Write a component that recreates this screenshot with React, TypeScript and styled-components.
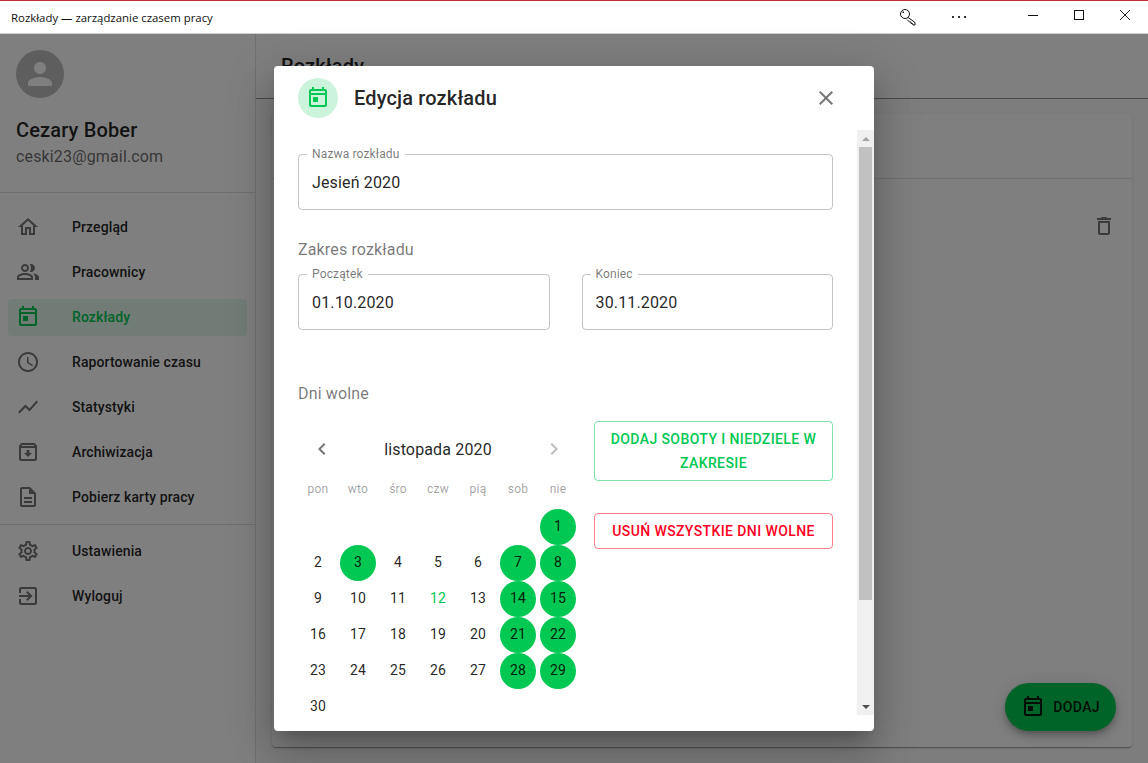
import React from 'react';
import styled, { createGlobalStyle } from 'styled-components';

const GREEN = '#00c853';
const RED = '#ff0022';

const paths = {
  home: 'M12 5.69l5 4.5V18h-2v-6H9v6H7v-7.81l5-4.5M12 3L2 12h3v8h6v-6h2v6h6v-8h3L12 3z',
  people: 'M16.67 13.13C18.04 14.06 19 15.32 19 17v3h4v-3c0-2.18-3.57-3.47-6.33-3.87zM15 12c2.21 0 4-1.79 4-4s-1.79-4-4-4c-.47 0-.91.1-1.33.24C14.5 5.27 15 6.58 15 8s-.5 2.73-1.33 3.76c.42.14.86.24 1.33.24zM9 12c2.21 0 4-1.79 4-4s-1.79-4-4-4-4 1.79-4 4 1.79 4 4 4zm0-6c1.1 0 2 .9 2 2s-.9 2-2 2-2-.9-2-2 .9-2 2-2zM9 13c-2.67 0-8 1.34-8 4v3h16v-3c0-2.66-5.33-4-8-4zm6 5H3v-.99C3.2 16.29 6.3 15 9 15s5.8 1.29 6 2v1z',
  today: 'M19 3h-1V1h-2v2H8V1H6v2H5c-1.11 0-1.99.9-1.99 2L3 19c0 1.1.89 2 2 2h14c1.1 0 2-.9 2-2V5c0-1.1-.9-2-2-2zm0 16H5V9h14v10zm0-12H5V5h14v2zM7 11h5v5H7z',
  clock: 'M11.99 2C6.47 2 2 6.48 2 12s4.47 10 9.99 10C17.52 22 22 17.52 22 12S17.52 2 11.99 2zM12 20c-4.42 0-8-3.58-8-8s3.58-8 8-8 8 3.58 8 8-3.58 8-8 8zm.5-13H11v6l5.25 3.15.75-1.23-4.5-2.67z',
  chart: 'M3.5 18.49l6-6.01 4 4L22 6.92l-1.41-1.41-7.09 7.97-4-4L2 16.99z',
  archive: 'M20.54 5.23l-1.39-1.68C18.88 3.21 18.47 3 18 3H6c-.47 0-.88.21-1.16.55L3.46 5.23C3.17 5.57 3 6.02 3 6.5V19c0 1.1.9 2 2 2h14c1.1 0 2-.9 2-2V6.5c0-.48-.17-.93-.46-1.27zM6.24 5h11.52l.83 1H5.42l.82-1zM5 19V8h14v11H5zm8.45-9h-2.9v3H8l4 4 4-4h-2.55z',
  doc: 'M8 16h8v2H8zm0-4h8v2H8zm6-10H6c-1.1 0-2 .9-2 2v16c0 1.1.89 2 1.99 2H18c1.1 0 2-.9 2-2V8l-6-6zm4 18H6V4h7v5h5v11z',
  settings: 'M19.43 12.98c.04-.32.07-.64.07-.98 0-.34-.03-.66-.07-.98l2.11-1.65c.19-.15.24-.42.12-.64l-2-3.46c-.09-.16-.26-.25-.44-.25-.06 0-.12.01-.17.03l-2.49 1c-.52-.4-1.08-.73-1.69-.98l-.38-2.65C14.46 2.18 14.25 2 14 2h-4c-.25 0-.46.18-.49.42l-.38 2.65c-.61.25-1.17.59-1.69.98l-2.49-1c-.06-.02-.12-.03-.18-.03-.17 0-.34.09-.43.25l-2 3.46c-.13.22-.07.49.12.64l2.11 1.65c-.04.32-.07.65-.07.98 0 .33.03.66.07.98l-2.11 1.65c-.19.15-.24.42-.12.64l2 3.46c.09.16.26.25.44.25.06 0 .12-.01.17-.03l2.49-1c.52.4 1.08.73 1.69.98l.38 2.65c.03.24.24.42.49.42h4c.25 0 .46-.18.49-.42l.38-2.65c.61-.25 1.17-.59 1.69-.98l2.49 1c.06.02.12.03.18.03.17 0 .34-.09.43-.25l2-3.46c.12-.22.07-.49-.12-.64l-2.11-1.65zm-1.98-1.71c.04.31.05.52.05.73 0 .21-.02.43-.05.73l-.14 1.13.89.7 1.08.84-.7 1.21-1.27-.51-1.04-.42-.9.68c-.43.32-.84.56-1.25.73l-1.06.43-.16 1.13-.2 1.35h-1.4l-.19-1.35-.16-1.13-1.06-.43c-.43-.18-.83-.41-1.23-.71l-.91-.7-1.06.43-1.27.51-.7-1.21 1.08-.84.89-.7-.14-1.13c-.03-.31-.05-.54-.05-.74s.02-.43.05-.73l.14-1.13-.89-.7-1.08-.84.7-1.21 1.27.51 1.04.42.9-.68c.43-.32.84-.56 1.25-.73l1.06-.43.16-1.13.2-1.35h1.39l.19 1.35.16 1.13 1.06.43c.43.18.83.41 1.23.71l.91.7 1.06-.43 1.27-.51.7 1.21-1.07.85-.89.7.14 1.13zM12 8c-2.21 0-4 1.79-4 4s1.79 4 4 4 4-1.79 4-4-1.79-4-4-4zm0 6c-1.1 0-2-.9-2-2s.9-2 2-2 2 .9 2 2-.9 2-2 2z',
  exit: 'M10.09 15.59L11.5 17l5-5-5-5-1.41 1.41L12.67 11H3v2h9.67l-2.58 2.59zM19 3H5c-1.11 0-2 .9-2 2v4h2V5h14v14H5v-4H3v4c0 1.1.89 2 2 2h14c1.1 0 2-.9 2-2V5c0-1.1-.9-2-2-2z',
  trash: 'M6 19c0 1.1.9 2 2 2h8c1.1 0 2-.9 2-2V7H6v12zM8 9h8v10H8V9zm7.5-5l-1-1h-5l-1 1H5v2h14V4z',
  close: 'M19 6.41L17.59 5 12 10.59 6.41 5 5 6.41 10.59 12 5 17.59 6.41 19 12 13.41 17.59 19 19 17.59 13.41 12z',
  left: 'M15.41 7.41L14 6l-6 6 6 6 1.41-1.41L10.83 12z',
  right: 'M10 6L8.59 7.41 13.17 12l-4.58 4.59L10 18l6-6z',
  person: 'M12 12c2.21 0 4-1.79 4-4s-1.79-4-4-4-4 1.79-4 4 1.79 4 4 4zm0 2c-2.67 0-8 1.34-8 4v2h16v-2c0-2.66-5.33-4-8-4z',
};

type IconName = keyof typeof paths;

const GlobalStyle = createGlobalStyle`
  html, body {
    margin: 0;
    padding: 0;
    height: 100%;
    overflow: hidden;
  }
  * {
    box-sizing: border-box;
  }
  body {
    font-family: Roboto, "Liberation Sans", sans-serif;
    color: rgba(0, 0, 0, 0.87);
    background: #fafafa;
  }
`;

const Page = styled.div`
  width: 1148px;
  height: 763px;
  display: flex;
  flex-direction: column;
`;

const TitleBar = styled.header`
  height: 34px;
  flex: none;
  display: flex;
  align-items: center;
  padding-left: 11px;
  background: #fff;
  border-top: 1px solid #c42b3a;
  border-bottom: 1px solid #d0d0d0;
  font-family: "Open Sans", "Noto Sans", sans-serif;
  font-size: 11.4px;
  color: #111;
`;

const WindowTitle = styled.span`
  flex: 1;
`;

const WindowButton = styled.div<{ $gap?: number; $raised?: boolean }>`
  width: 46px;
  height: 32px;
  display: flex;
  align-items: center;
  justify-content: center;
  margin-right: ${(p) => p.$gap ?? 0}px;
  padding-bottom: ${(p) => (p.$raised ? 4 : 0)}px;
`;

const AppBody = styled.div`
  position: relative;
  flex: 1;
  display: flex;
  min-height: 0;
`;

const Sidebar = styled.aside`
  width: 256px;
  flex: none;
  background: #fff;
  border-right: 1px solid rgba(0, 0, 0, 0.12);
`;

const Profile = styled.div`
  padding: 16px 16px 23px;
  border-bottom: 1px solid rgba(0, 0, 0, 0.12);
`;

const Avatar = styled.div`
  width: 48px;
  height: 48px;
  border-radius: 50%;
  background: #bdbdbd;
  display: flex;
  align-items: center;
  justify-content: center;
  color: #fff;
`;

const UserName = styled.div`
  margin-top: 17px;
  font-size: 20px;
  font-weight: 500;
  line-height: 30px;
  letter-spacing: 0.15px;
`;

const UserMail = styled.div`
  font-size: 16px;
  line-height: 24px;
  letter-spacing: 0.15px;
  color: rgba(0, 0, 0, 0.6);
`;

const NavList = styled.nav<{ $top: number }>`
  display: flex;
  flex-direction: column;
  gap: 8px;
  padding: ${(p) => p.$top}px 8px 8px;
`;

const NavDivider = styled.div`
  height: 1px;
  background: rgba(0, 0, 0, 0.12);
`;

const NavItem = styled.div<{ $active?: boolean }>`
  height: 37px;
  display: flex;
  align-items: center;
  gap: 32px;
  padding: 0 8px 2px;
  border-radius: 4px;
  font-size: 14px;
  font-weight: 500;
  letter-spacing: 0.1px;
  background: ${(p) => (p.$active ? 'rgba(0, 200, 83, 0.12)' : 'transparent')};
  color: ${(p) => (p.$active ? GREEN : 'rgba(0, 0, 0, 0.87)')};
  svg {
    color: ${(p) => (p.$active ? GREEN : 'rgba(0, 0, 0, 0.54)')};
  }
`;

const Main = styled.main`
  flex: 1;
  min-width: 0;
  display: flex;
  flex-direction: column;
`;

const MainHeader = styled.div`
  height: 65px;
  flex: none;
  padding: 0 25px;
  display: flex;
  align-items: center;
  background: #fff;
  border-bottom: 1px solid rgba(0, 0, 0, 0.42);
  font-size: 20px;
  font-weight: 500;
  letter-spacing: 0.15px;
`;

const MainContent = styled.div`
  flex: 1;
  padding: 15px 16px 16px;
  display: flex;
`;

const Card = styled.section`
  flex: 1;
  background: #fff;
  border-radius: 4px;
  box-shadow: 0 2px 1px -1px rgba(0, 0, 0, 0.2), 0 1px 1px rgba(0, 0, 0, 0.14), 0 1px 3px rgba(0, 0, 0, 0.12);
`;

const CardHead = styled.div`
  height: 65px;
  border-bottom: 1px solid rgba(0, 0, 0, 0.12);
`;

const CardRow = styled.div`
  display: flex;
  justify-content: flex-end;
  padding: 35px 16px 0;
  color: rgba(0, 0, 0, 0.54);
`;

const Fab = styled.div`
  position: absolute;
  right: 32px;
  bottom: 32px;
  height: 48px;
  padding: 0 16px;
  display: flex;
  align-items: center;
  gap: 8px;
  border-radius: 24px;
  background: ${GREEN};
  font-size: 14px;
  font-weight: 500;
  letter-spacing: 0.4px;
  box-shadow: 0 3px 5px -1px rgba(0, 0, 0, 0.2), 0 6px 10px rgba(0, 0, 0, 0.14), 0 1px 18px rgba(0, 0, 0, 0.12);
`;

const Backdrop = styled.div`
  position: absolute;
  inset: 0;
  display: flex;
  align-items: center;
  justify-content: center;
  background: rgba(0, 0, 0, 0.5);
`;

const Modal = styled.div`
  width: 600px;
  height: 665px;
  display: flex;
  flex-direction: column;
  background: #fff;
  border-radius: 4px;
  box-shadow: 0 11px 15px -7px rgba(0, 0, 0, 0.2), 0 24px 38px 3px rgba(0, 0, 0, 0.14), 0 9px 46px 8px rgba(0, 0, 0, 0.12);
`;

const ModalHeader = styled.div`
  height: 64px;
  flex: none;
  display: flex;
  align-items: center;
  padding: 0 36px 0 24px;
  color: rgba(0, 0, 0, 0.54);
`;

const ModalBadge = styled.div`
  width: 40px;
  height: 40px;
  border-radius: 50%;
  background: #ccf4dd;
  color: ${GREEN};
  display: flex;
  align-items: center;
  justify-content: center;
`;

const ModalTitle = styled.h2`
  flex: 1;
  margin: 0 0 0 16px;
  font-size: 20px;
  font-weight: 500;
  letter-spacing: 0.15px;
  color: rgba(0, 0, 0, 0.87);
`;

const ModalBody = styled.div`
  height: 585px;
  flex: none;
  display: flex;
`;

const ModalContent = styled.div`
  flex: 1;
  min-width: 0;
  padding: 18px 24px 0;
  overflow: hidden;
`;

const Scrollbar = styled.div`
  width: 17px;
  flex: none;
  display: flex;
  flex-direction: column;
  align-items: center;
  background: #f0f0f0;
`;

const ScrollArrow = styled.div<{ $down?: boolean }>`
  height: 17px;
  flex: none;
  display: flex;
  align-items: center;
  justify-content: center;
  &::before {
    content: '';
    border-left: 4px solid transparent;
    border-right: 4px solid transparent;
    ${(p) => (p.$down ? 'border-top: 4px solid #505050;' : 'border-bottom: 4px solid #a3a3a3;')}
  }
`;

const ScrollThumb = styled.div`
  width: 13px;
  height: 453px;
  background: #c1c1c1;
`;

const ScrollTrack = styled.div`
  flex: 1;
`;

// the legend sits on the top border, so the fieldset box starts 6px above the visible outline
const Field = styled.fieldset<{ $fill?: boolean }>`
  margin: 0;
  padding: 0 13px;
  height: 62px;
  min-width: 0;
  ${(p) => (p.$fill ? 'flex: 1;' : '')}
  border: 1px solid rgba(0, 0, 0, 0.23);
  border-radius: 4px;
  font-size: 16px;
  line-height: 46px;
  letter-spacing: 0.15px;
  legend {
    margin-left: -5px;
    padding: 0 5px;
    font-size: 12px;
    line-height: 12px;
    color: rgba(0, 0, 0, 0.54);
  }
`;

const SectionLabel = styled.div<{ $top: number }>`
  margin-top: ${(p) => p.$top}px;
  font-size: 16px;
  line-height: 24px;
  letter-spacing: 0.15px;
  color: rgba(0, 0, 0, 0.54);
`;

const FieldRow = styled.div`
  margin-top: 6px;
  display: flex;
  gap: 32px;
`;

const CalendarRow = styled.div`
  margin-top: 15px;
  display: flex;
  gap: 16px;
  align-items: flex-start;
`;

const Calendar = styled.div`
  width: 280px;
  flex: none;
`;

const MonthBar = styled.div`
  height: 56px;
  display: flex;
  align-items: center;
  justify-content: space-between;
  padding: 0 12px;
  font-size: 16px;
  letter-spacing: 0.15px;
  color: rgba(0, 0, 0, 0.87);
`;

const Chevron = styled.span<{ $off?: boolean }>`
  display: flex;
  color: ${(p) => (p.$off ? 'rgba(0, 0, 0, 0.26)' : 'rgba(0, 0, 0, 0.54)')};
`;

const WeekDays = styled.div`
  display: grid;
  grid-template-columns: repeat(7, 40px);
  height: 24px;
  margin-bottom: 8px;
  align-items: center;
  text-align: center;
  font-size: 12px;
  letter-spacing: 0.2px;
  color: rgba(0, 0, 0, 0.38);
`;

const DayGrid = styled.div`
  display: grid;
  grid-template-columns: repeat(7, 40px);
  grid-auto-rows: 36px;
`;

const Day = styled.div<{ $off?: boolean; $today?: boolean; $start?: number }>`
  width: 36px;
  height: 36px;
  padding-bottom: 2px;
  justify-self: center;
  border-radius: 50%;
  display: flex;
  align-items: center;
  justify-content: center;
  font-size: 14px;
  letter-spacing: 0.15px;
  ${(p) => (p.$start ? `grid-column-start: ${p.$start};` : '')}
  background: ${(p) => (p.$off ? GREEN : 'transparent')};
  color: ${(p) => (p.$today ? GREEN : 'rgba(0, 0, 0, 0.87)')};
`;

const Actions = styled.div`
  flex: 1;
  display: flex;
  flex-direction: column;
  gap: 32px;
`;

const OutlineButton = styled.div<{ $color: string; $border: string }>`
  padding: 5px 15px;
  border: 1px solid ${(p) => p.$border};
  border-radius: 4px;
  color: ${(p) => p.$color};
  font-size: 14px;
  font-weight: 500;
  line-height: 24px;
  letter-spacing: 0.4px;
  text-align: center;
  text-transform: uppercase;
`;

const Icon: React.FC<{ name: IconName; size?: number }> = ({ name, size = 24 }) => (
  <svg width={size} height={size} viewBox="0 0 24 24" fill="currentColor" style={{ flex: 'none' }}>
    <path d={paths[name]} />
  </svg>
);

const topNav: [IconName, string][] = [
  ['home', 'Przegląd'],
  ['people', 'Pracownicy'],
  ['today', 'Rozkłady'],
  ['clock', 'Raportowanie czasu'],
  ['chart', 'Statystyki'],
  ['archive', 'Archiwizacja'],
  ['doc', 'Pobierz karty pracy'],
];

const bottomNav: [IconName, string][] = [
  ['settings', 'Ustawienia'],
  ['exit', 'Wyloguj'],
];

const weekDays = ['pon', 'wto', 'śro', 'czw', 'pią', 'sob', 'nie'];
const daysOff = [1, 3, 7, 8, 14, 15, 21, 22, 28, 29];
const days = Array.from({ length: 30 }, (_, i) => i + 1);

const App: React.FC = () => {
  return (
    <Page>
      <GlobalStyle />
      <TitleBar>
        <WindowTitle>Rozkłady — zarządzanie czasem pracy</WindowTitle>
        <WindowButton $gap={5}>
          <svg width="18" height="18" viewBox="0 0 18 18" fill="none" stroke="#111" strokeWidth="1">
            <circle cx="6" cy="6" r="4.5" />
            <path d="M9 9.5l6.5 4.5.5 1v2h-2l-.5-1.5h-1.5v-1.5h-1.5l-2.5-2.5" />
            <rect x="3.5" y="3.5" width="1.5" height="1.5" fill="#111" stroke="none" />
          </svg>
        </WindowButton>
        <WindowButton $gap={28}>
          <svg width="14" height="4" viewBox="0 0 14 4" fill="#333">
            <rect x="0" y="1" width="2" height="2" />
            <rect x="6" y="1" width="2" height="2" />
            <rect x="12" y="1" width="2" height="2" />
          </svg>
        </WindowButton>
        <WindowButton $raised>
          <svg width="10" height="1" viewBox="0 0 10 1" fill="#111">
            <rect width="10" height="1" />
          </svg>
        </WindowButton>
        <WindowButton $raised>
          <svg width="10" height="10" viewBox="0 0 10 10" fill="none" stroke="#111">
            <rect x="0.5" y="0.5" width="9" height="9" />
          </svg>
        </WindowButton>
        <WindowButton $raised>
          <svg width="10" height="10" viewBox="0 0 10 10" fill="none" stroke="#111" strokeWidth="0.9">
            <path d="M0 0l10 10M10 0L0 10" />
          </svg>
        </WindowButton>
      </TitleBar>
      <AppBody>
        <Sidebar>
          <Profile>
            <Avatar>
              <Icon name="person" size={36} />
            </Avatar>
            <UserName>Cezary Bober</UserName>
            <UserMail>ceski23@gmail.com</UserMail>
          </Profile>
          <NavList $top={16}>
            {topNav.map(([icon, label]) => (
              <NavItem key={label} $active={label === 'Rozkłady'}>
                <Icon name={icon} />
                {label}
              </NavItem>
            ))}
          </NavList>
          <NavDivider />
          <NavList $top={8}>
            {bottomNav.map(([icon, label]) => (
              <NavItem key={label}>
                <Icon name={icon} />
                {label}
              </NavItem>
            ))}
          </NavList>
        </Sidebar>
        <Main>
          <MainHeader>Rozkłady</MainHeader>
          <MainContent>
            <Card>
              <CardHead />
              <CardRow>
                <Icon name="trash" />
              </CardRow>
            </Card>
          </MainContent>
        </Main>
        <Fab>
          <Icon name="today" />
          DODAJ
        </Fab>
        <Backdrop>
          <Modal>
            <ModalHeader>
              <ModalBadge>
                <Icon name="today" />
              </ModalBadge>
              <ModalTitle>Edycja rozkładu</ModalTitle>
              <Icon name="close" />
            </ModalHeader>
            <ModalBody>
              <ModalContent>
                <Field>
                  <legend>Nazwa rozkładu</legend>
                  Jesień 2020
                </Field>
                <SectionLabel $top={28}>Zakres rozkładu</SectionLabel>
                <FieldRow>
                  <Field $fill>
                    <legend>Początek</legend>
                    01.10.2020
                  </Field>
                  <Field $fill>
                    <legend>Koniec</legend>
                    30.11.2020
                  </Field>
                </FieldRow>
                <SectionLabel $top={52}>Dni wolne</SectionLabel>
                <CalendarRow>
                  <Calendar>
                    <MonthBar>
                      <Chevron>
                        <Icon name="left" />
                      </Chevron>
                      listopada 2020
                      <Chevron $off>
                        <Icon name="right" />
                      </Chevron>
                    </MonthBar>
                    <WeekDays>
                      {weekDays.map((d) => (
                        <span key={d}>{d}</span>
                      ))}
                    </WeekDays>
                    <DayGrid>
                      {days.map((d) => (
                        <Day key={d} $off={daysOff.includes(d)} $today={d === 12} $start={d === 1 ? 7 : undefined}>
                          {d}
                        </Day>
                      ))}
                    </DayGrid>
                  </Calendar>
                  <Actions>
                    <OutlineButton $color={GREEN} $border="rgba(0, 200, 83, 0.5)">
                      Dodaj soboty i niedziele w zakresie
                    </OutlineButton>
                    <OutlineButton $color={RED} $border="rgba(255, 0, 34, 0.5)">
                      Usuń wszystkie dni wolne
                    </OutlineButton>
                  </Actions>
                </CalendarRow>
              </ModalContent>
              <Scrollbar>
                <ScrollArrow />
                <ScrollThumb />
                <ScrollTrack />
                <ScrollArrow $down />
              </Scrollbar>
            </ModalBody>
          </Modal>
        </Backdrop>
      </AppBody>
    </Page>
  );
};

export default App;
